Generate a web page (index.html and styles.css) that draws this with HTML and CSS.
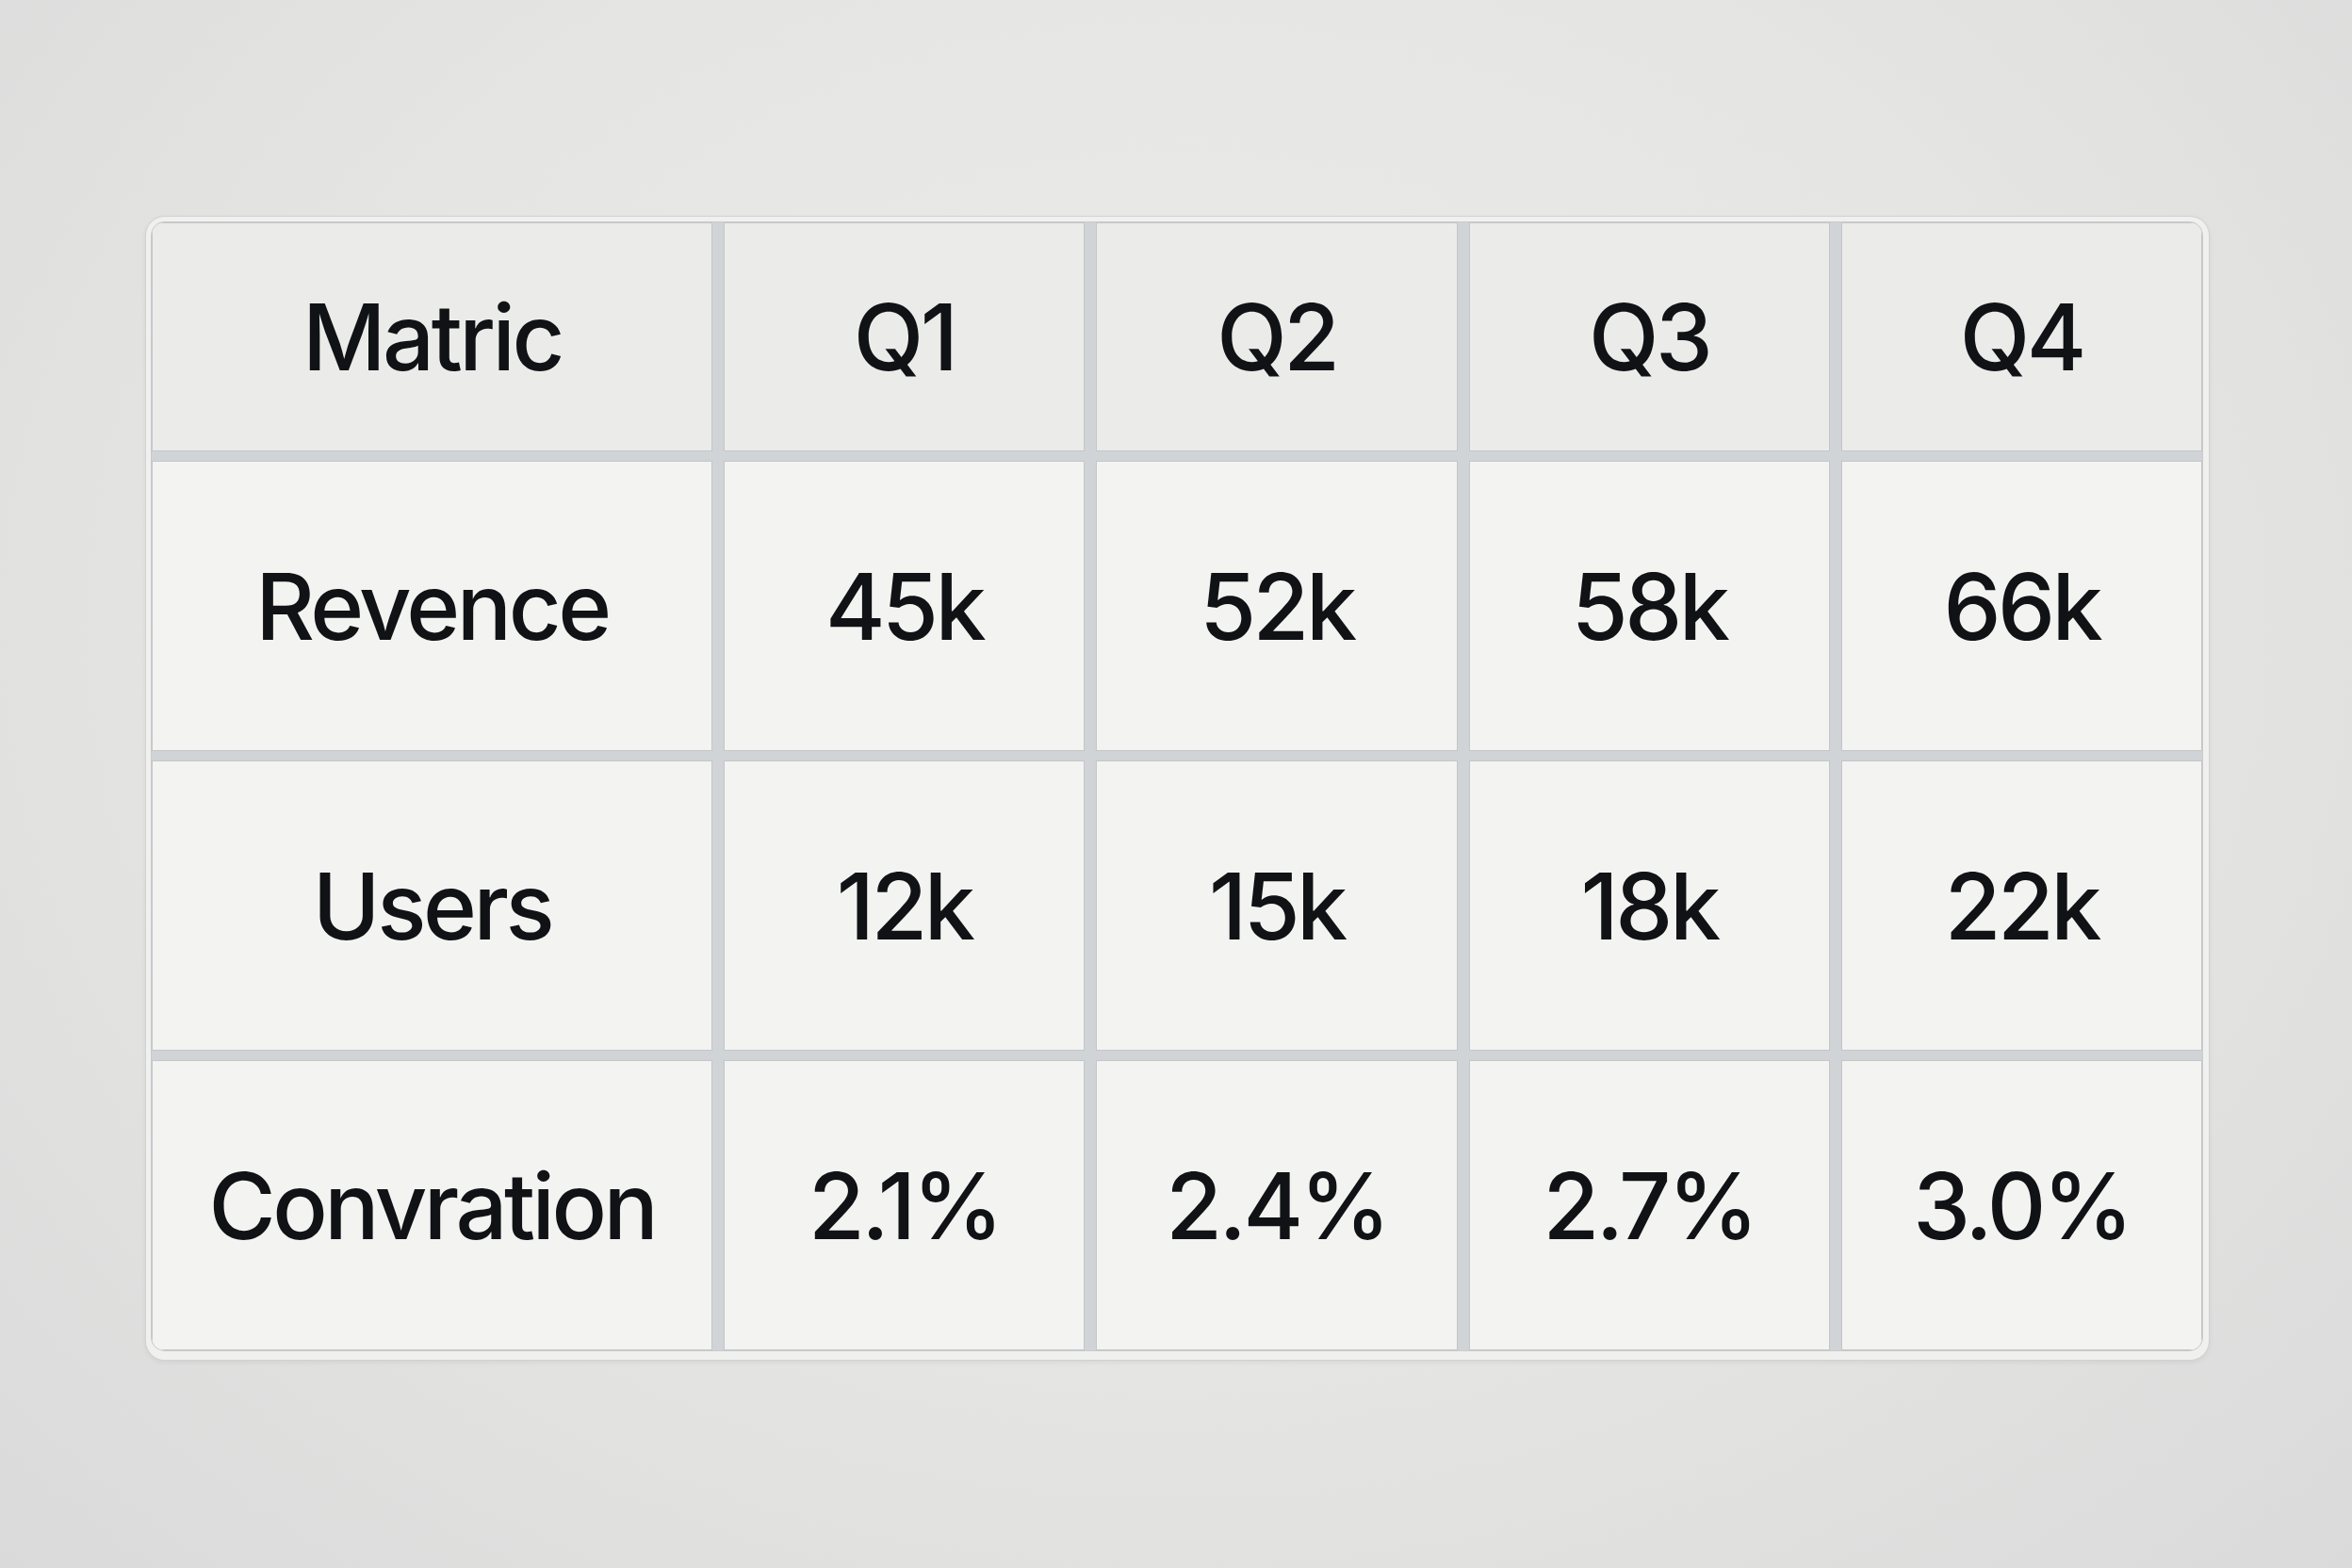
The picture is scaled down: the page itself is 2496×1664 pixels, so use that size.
FILE: index.html
```html
<!DOCTYPE html>
<html lang="en">
<head>
<meta charset="utf-8">
<title>Quarterly metrics</title>
<link rel="stylesheet" href="styles.css">
</head>
<body>
<main class="page">
  <div class="frame">
    <div class="grid">
      <div class="cell head">Matric</div>
      <div class="cell head">Q1</div>
      <div class="cell head">Q2</div>
      <div class="cell head">Q3</div>
      <div class="cell head">Q4</div>

      <div class="cell">Revence</div>
      <div class="cell">45k</div>
      <div class="cell">52k</div>
      <div class="cell">58k</div>
      <div class="cell">66k</div>

      <div class="cell">Users</div>
      <div class="cell">12k</div>
      <div class="cell">15k</div>
      <div class="cell">18k</div>
      <div class="cell">22k</div>

      <div class="cell">Convration</div>
      <div class="cell">2.1%</div>
      <div class="cell">2.4%</div>
      <div class="cell">2.7%</div>
      <div class="cell">3.0%</div>
    </div>
  </div>
</main>
</body>
</html>
```

FILE: styles.css
```css
html, body {
  margin: 0;
  padding: 0;
}
body {
  width: 2496px;
  height: 1664px;
  overflow: hidden;
  background: radial-gradient(ellipse at 50% 40%, #ececeb 0%, #e5e5e4 55%, #dadada 100%);
  font-family: Inter, "Noto Sans", "Liberation Sans", sans-serif;
}
.page {
  box-sizing: border-box;
  height: 100%;
  padding: 230px 152px 0 155px;
}
.frame {
  box-sizing: border-box;
  width: 2189px;
  height: 1213px;
  padding: 6px 7px 10px 6px;
  background: #f0f0ef;
  border-radius: 20px;
  box-shadow: 0 0 0 1px #d2d2d2, 0 2px 6px rgba(0, 0, 0, 0.08);
}
.grid {
  display: grid;
  grid-template-columns: 595px repeat(4, 1fr);
  grid-template-rows: 243px repeat(3, 1fr);
  gap: 10px 12px;
  height: 100%;
  background: #d1d4d6;
  border-radius: 14px;
  overflow: hidden;
  box-shadow: 0 0 0 1px #c8cacc;
}
.cell {
  display: flex;
  align-items: center;
  justify-content: center;
  background: #f3f3f1;
  border: 1px solid #c4c6c9;
  font-size: 97px;
  font-weight: 500;
  color: #101215;
  letter-spacing: -3.5px;
}
.cell.head {
  background: #ebebea;
}
```
